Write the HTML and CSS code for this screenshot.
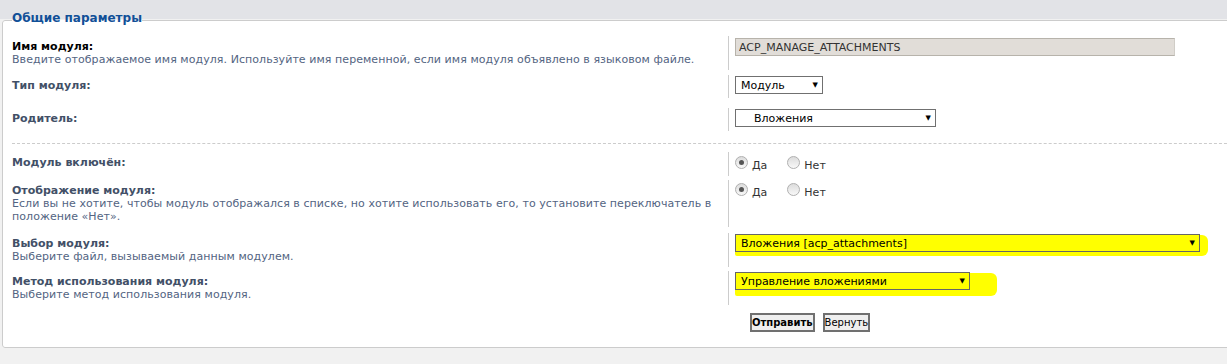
FILE: index.html
```html
<!DOCTYPE html>
<html lang="ru">
<head>
    <meta charset="UTF-8">
    <title>Параметры модуля</title>
    <link rel="stylesheet" href="styles.css">
</head>
<body>
    <fieldset class="settings">
        <legend>Общие параметры</legend>

        <div class="row row-first">
            <div class="term">
                <label class="name active">Имя модуля:</label>
                <span class="explain">Введите отображаемое имя модуля. Используйте имя переменной, если имя модуля объявлено в языковом файле.</span>
            </div>
            <div class="field">
                <input class="text-input" type="text" value="ACP_MANAGE_ATTACHMENTS" readonly>
            </div>
        </div>

        <div class="row row-wide">
            <div class="term"><label class="name">Тип модуля:</label></div>
            <div class="field">
                <div class="dropdown w-type"><span>Модуль</span><span class="arrow">&#9660;</span></div>
            </div>
        </div>

        <div class="row">
            <div class="term"><label class="name">Родитель:</label></div>
            <div class="field">
                <div class="dropdown w-parent"><span class="indent">Вложения</span><span class="arrow">&#9660;</span></div>
            </div>
        </div>

        <hr class="divider">

        <div class="row row-tight">
            <div class="term"><label class="name">Модуль включён:</label></div>
            <div class="field">
                <div class="radio-group">
                    <span class="option"><span class="radio checked"></span><span class="option-text">Да</span></span>
                    <span class="option"><span class="radio"></span><span class="option-text">Нет</span></span>
                </div>
            </div>
        </div>

        <div class="row">
            <div class="term">
                <label class="name">Отображение модуля:</label>
                <span class="explain">Если вы не хотите, чтобы модуль отображался в списке, но хотите использовать его, то установите переключатель в<br>положение «Нет».</span>
            </div>
            <div class="field">
                <div class="radio-group second">
                    <span class="option"><span class="radio checked"></span><span class="option-text">Да</span></span>
                    <span class="option"><span class="radio"></span><span class="option-text">Нет</span></span>
                </div>
            </div>
        </div>

        <div class="row row-close">
            <div class="term">
                <label class="name">Выбор модуля:</label>
                <span class="explain">Выберите файл, вызываемый данным модулем.</span>
            </div>
            <div class="field">
                <div class="mark mark-file">
                    <div class="dropdown yellow w-file"><span>Вложения [acp_attachments]</span><span class="arrow">&#9660;</span></div>
                </div>
            </div>
        </div>

        <div class="row">
            <div class="term">
                <label class="name">Метод использования модуля:</label>
                <span class="explain">Выберите метод использования модуля.</span>
            </div>
            <div class="field">
                <div class="mark mark-mode">
                    <div class="dropdown yellow w-mode"><span>Управление вложениями</span><span class="arrow">&#9660;</span></div>
                </div>
            </div>
        </div>

        <div class="buttons">
            <button class="btn btn-primary" type="button">Отправить</button>
            <button class="btn" type="button">Вернуть</button>
        </div>
    </fieldset>
</body>
</html>
```

FILE: styles.css
```css
html {
    background-color: #f1f1f1;
    background-image: linear-gradient(#e2e3e7, #e2e3e7);
    background-size: 100% 19px;
    background-repeat: no-repeat;
}
body {
    margin: 0;
    font-family: "DejaVu Sans", Verdana, sans-serif;
    font-size: 11px;
    line-height: 13px;
    color: #333;
    overflow: hidden;
}
.settings {
    margin: 11px -30px 0 2px;
    padding: 7px 9px 15px 9px;
    border: 1px solid #ccc;
    border-radius: 3px;
    background: #fff;
    min-width: 0;
}
.settings legend {
    padding: 0 0 4px 0;
    font-size: 12px;
    line-height: 14px;
    font-weight: bold;
    color: #115098;
}
.row {
    display: flex;
    margin-bottom: 6px;
}
.row-first {
    margin-bottom: 5px;
}
.row-wide {
    margin-bottom: 10px;
}
.row-tight {
    margin-bottom: 4px;
}
.row-close {
    margin-bottom: 4px;
}
.term {
    width: 716px;
    flex-shrink: 0;
    padding: 4px 0;
}
.field {
    flex: 1;
    border-left: 1px solid #ccc;
    padding: 1px 0 4px 6px;
}
.row-first .field {
    padding-top: 2px;
}
.name {
    display: block;
    font-weight: bold;
    color: #425067;
}
.name.active {
    color: #000;
}
.explain {
    display: block;
    color: #536482;
    letter-spacing: 0.06px;
}
.text-input {
    display: block;
    width: 440px;
    height: 18px;
    box-sizing: border-box;
    margin: 0;
    padding: 0 3px;
    border: 1px solid #b7b3ab;
    border-right-color: #d0cdc7;
    background: #e1ddd8;
    color: #333;
    font: inherit;
    outline: none;
}
.dropdown {
    display: flex;
    align-items: center;
    justify-content: space-between;
    box-sizing: border-box;
    height: 18px;
    padding: 0 4px 0 5px;
    border: 1px solid #707070;
    background: #fff;
    color: #000;
}
.dropdown .arrow {
    font-size: 7px;
    line-height: 8px;
}
.dropdown .indent {
    padding-left: 13px;
}
.dropdown.yellow {
    background: #ffff00;
    border-color: #666;
}
.w-type { width: 88px; }
.w-parent { width: 201px; }
.w-file { width: 465px; }
.w-mode { width: 235px; }
.mark {
    position: relative;
    z-index: 0;
    width: max-content;
}
.mark::before {
    content: "";
    position: absolute;
    left: 0;
    top: 1px;
    bottom: -4px;
    background: #ffff00;
    border-radius: 2px 6px 6px 2px;
    z-index: -1;
}
.mark-file::before {
    right: -8px;
}
.mark-mode::before {
    right: -27px;
    bottom: -6px;
}
.divider {
    margin: 12px 0 8px 0;
    border: 0;
    border-top: 1px dashed #ccc;
    height: 0;
}
.radio-group {
    display: flex;
    margin-top: 3px;
}
.radio-group.second {
    margin-top: 2px;
}
.option {
    display: flex;
    align-items: flex-start;
    margin-right: 20px;
}
.radio {
    width: 13px;
    height: 13px;
    box-sizing: border-box;
    border: 1px solid #b0b0b0;
    border-radius: 50%;
    background: linear-gradient(#dcdcdc, #f8f8f8);
    margin-right: 4px;
    position: relative;
}
.radio.checked::after {
    content: "";
    position: absolute;
    left: 3px;
    top: 3px;
    width: 5px;
    height: 5px;
    border-radius: 50%;
    background: #555;
}
.option-text {
    padding-top: 3px;
    color: #333;
}
.buttons {
    display: flex;
    gap: 8px;
    margin-top: 8px;
    padding-left: 738px;
}
.btn {
    height: 19px;
    box-sizing: border-box;
    margin: 0;
    padding: 0;
    border: 2px solid #707070;
    background: #efefef;
    color: #000;
    font-family: "DejaVu Sans", Verdana, sans-serif;
    font-size: 10px;
    line-height: 13px;
}
.btn-primary {
    font-weight: bold;
}
```
